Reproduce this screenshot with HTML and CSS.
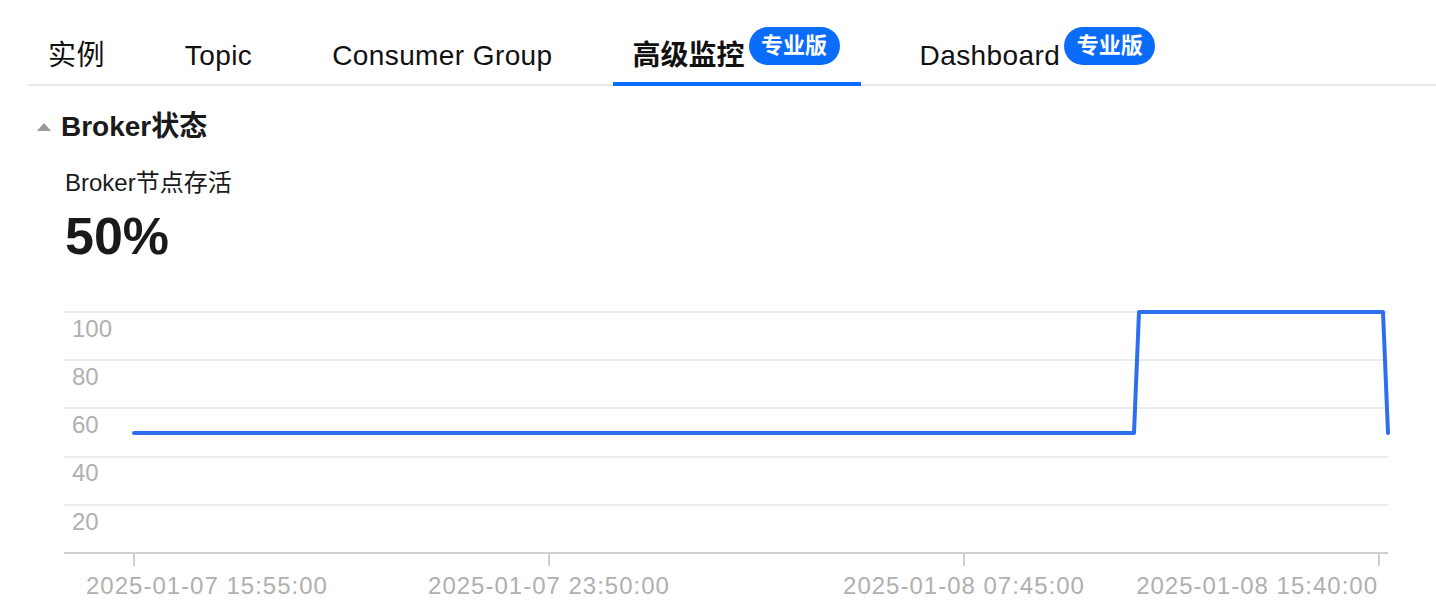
FILE: index.html
```html
<!DOCTYPE html>
<html lang="zh">
<head>
<meta charset="utf-8">
<link rel="stylesheet" href="styles.css">
</head>
<body>
<nav class="tabs">
  <div class="tab">实例</div>
  <div class="tab">Topic</div>
  <div class="tab">Consumer Group</div>
  <div class="tab active">高级监控<span class="badge">专业版</span></div>
  <div class="tab">Dashboard<span class="badge">专业版</span></div>
</nav>
<section class="section">
  <div class="section-head"><span class="caret"></span><span class="section-title">Broker状态</span></div>
  <div class="metric">
    <div class="metric-label">Broker节点存活</div>
    <div class="metric-value">50%</div>
  </div>
  <div class="chart">
    <svg width="1436" height="310" viewBox="0 290 1436 310" xmlns="http://www.w3.org/2000/svg">
      <g stroke="#ececec" stroke-width="2">
        <line x1="64" y1="312" x2="1388" y2="312"/>
        <line x1="64" y1="360" x2="1388" y2="360"/>
        <line x1="64" y1="408" x2="1388" y2="408"/>
        <line x1="64" y1="457" x2="1388" y2="457"/>
        <line x1="64" y1="505" x2="1388" y2="505"/>
      </g>
      <line x1="64" y1="553" x2="1388" y2="553" stroke="#cfcfcf" stroke-width="2"/>
      <g stroke="#cfcfcf" stroke-width="2">
        <line x1="134" y1="553" x2="134" y2="566"/>
        <line x1="549" y1="553" x2="549" y2="566"/>
        <line x1="964" y1="553" x2="964" y2="566"/>
        <line x1="1379" y1="553" x2="1379" y2="566"/>
      </g>
      <g class="ylab">
        <text x="72" y="337">100</text>
        <text x="72" y="385">80</text>
        <text x="72" y="433">60</text>
        <text x="72" y="481">40</text>
        <text x="72" y="530">20</text>
      </g>
      <g class="xlab">
        <text x="86" y="594">2025-01-07 15:55:00</text>
        <text x="549" y="594" text-anchor="middle">2025-01-07 23:50:00</text>
        <text x="964" y="594" text-anchor="middle">2025-01-08 07:45:00</text>
        <text x="1378" y="594" text-anchor="end">2025-01-08 15:40:00</text>
      </g>
      <polyline points="134,433 1134,433 1139,312 1383,312 1388,433" fill="none" stroke="#2e6ff0" stroke-width="4" stroke-linejoin="round" stroke-linecap="round"/>
    </svg>
  </div>
</section>
</body>
</html>
```
FILE: styles.css
```css
* { box-sizing: border-box; }
html, body {
  margin: 0;
  padding: 0;
  background: #ffffff;
  font-family: "Liberation Sans", Arial, "Noto Sans CJK SC", sans-serif;
  color: #111111;
  overflow: hidden;
}
.tabs {
  display: flex;
  margin-left: 28px;
  height: 86px;
  border-bottom: 2px solid #e6e8eb;
  gap: 39px;
}
.tab {
  position: relative;
  display: flex;
  align-items: flex-start;
  padding: 38px 21px 0 20px;
  font-size: 28px;
  line-height: 36px;
  letter-spacing: 0.4px;
  color: #111;
  white-space: nowrap;
}
.tab.active {
  font-weight: bold;
  letter-spacing: 0;
}
.tab.active::after {
  content: "";
  position: absolute;
  left: 0;
  right: 0;
  bottom: -2px;
  height: 4px;
  background: #0a6cff;
}
.badge {
  display: inline-flex;
  align-items: center;
  justify-content: center;
  width: 91px;
  height: 38px;
  margin-top: -11px;
  margin-left: 4px;
  border-radius: 19px;
  background: #0a6cfa;
  color: #ffffff;
  font-size: 22px;
  font-weight: bold;
  letter-spacing: 0;
  line-height: 1;
}
.section {
  padding-left: 37px;
}
.section-head {
  display: flex;
  align-items: center;
  margin-top: 26px;
  height: 30px;
}
.caret {
  width: 0;
  height: 0;
  border-left: 7px solid transparent;
  border-right: 7px solid transparent;
  border-bottom: 8px solid #999999;
  margin-right: 10px;
}
.section-title {
  font-size: 28px;
  font-weight: bold;
  color: #1a1a1a;
  line-height: 30px;
}
.metric {
  padding-left: 28px;
  margin-top: 26px;
}
.metric-label {
  font-size: 24px;
  line-height: 30px;
  color: #1a1a1a;
}
.metric-value {
  font-size: 52px;
  font-weight: bold;
  line-height: 60px;
  margin-top: 8px;
  color: #1a1a1a;
}
.chart {
  margin-left: -37px;
  margin-top: 24px;
}
.chart svg { display: block; }
.ylab text {
  font-family: "Liberation Sans", Arial, sans-serif;
  font-size: 24px;
  fill: #b0b0b0;
}
.xlab text {
  font-family: "Liberation Sans", Arial, sans-serif;
  font-size: 24px;
  letter-spacing: 1px;
  fill: #b0b0b0;
}
```
